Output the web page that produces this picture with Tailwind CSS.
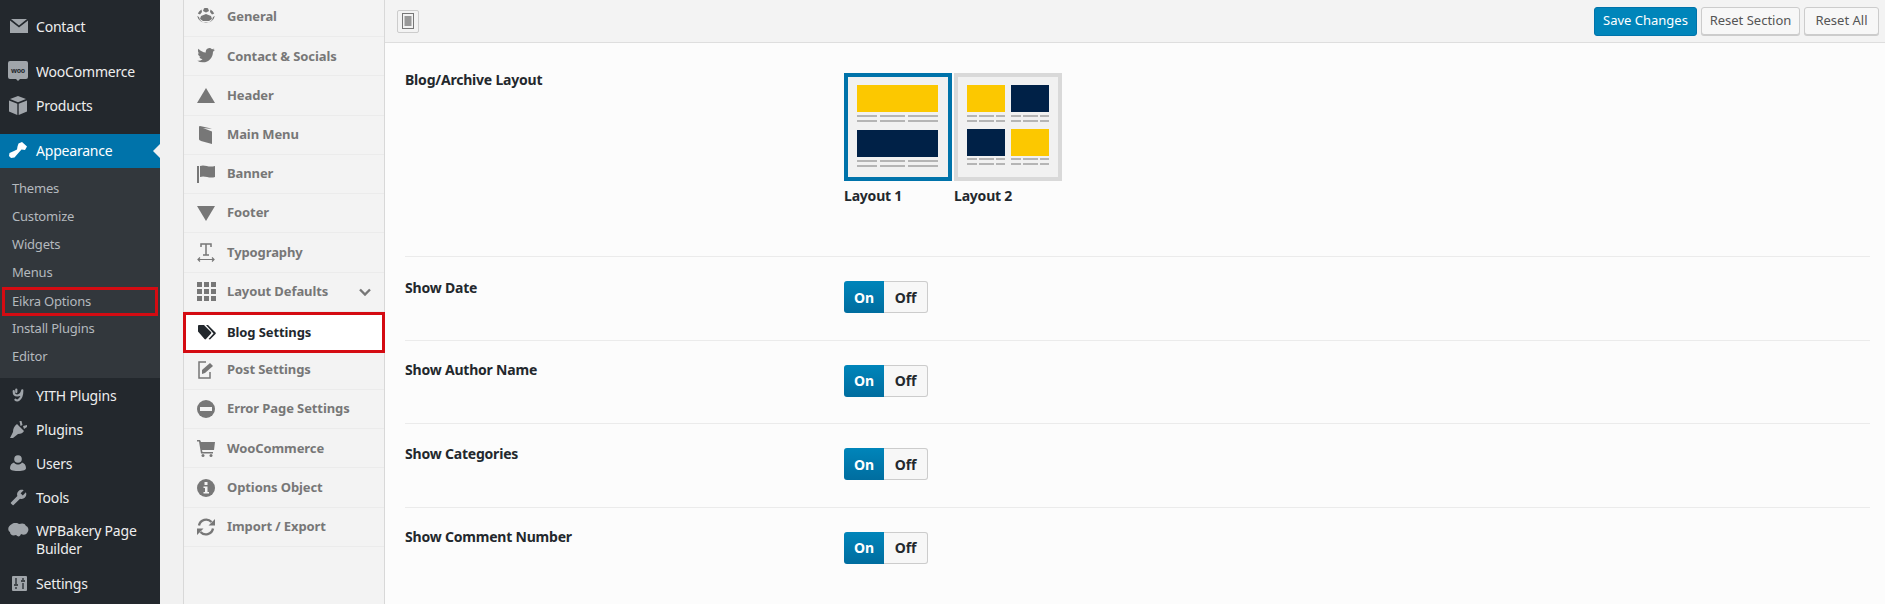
<!DOCTYPE html>
<html lang="en">
<head>
<meta charset="utf-8">
<title>Eikra Options</title>
<script src="https://cdn.jsdelivr.net/npm/@tailwindcss/browser@4"></script>
</head>
<body class="m-0">
<div class="flex w-[1885px] h-[604px] overflow-hidden bg-[#f1f1f1] font-['Noto_Sans','Open_Sans',sans-serif] text-[13px]">

  <!-- WP sidebar -->
  <aside class="w-[160px] shrink-0 bg-[#23282d] text-[#eee] text-[14px] tracking-[-0.2px] pt-[10px]">
    <div class="h-[34px] pb-[2px] flex items-center"><span class="w-[36px] flex justify-center pl-[2px]"><svg class="w-[18px] h-[14px] fill-[#a0a5aa]" viewBox="0 0 18 14"><path d="M1 0h16L9 6.500zM0 1.500l9 7 9-7V14H0z"/></svg></span>Contact</div>
    <div class="h-[11px]"></div>
    <div class="h-[34px] pb-[2px] flex items-center"><span class="w-[36px] flex justify-center"><svg class="w-[20px] h-[20px]" viewBox="0 0 20 20"><path fill="#a0a5aa" d="M2 0h16a2 2 0 012 2v14a2 2 0 01-2 2h-6l-2 2-2-2H2a2 2 0 01-2-2V2a2 2 0 012-2z"/><text x="10" y="11.500" font-size="7" font-weight="700" letter-spacing="-.3" text-anchor="middle" fill="#23282d">woo</text></svg></span>WooCommerce</div>
    <div class="h-[34px] pb-[2px] flex items-center"><span class="w-[36px] flex justify-center"><svg class="w-[18px] h-[19px] fill-[#a0a5aa]" viewBox="0 0 18 19"><path d="M9 0l8 3-8 3.200L1 3zM0 4.500l8.300 3.200V19L0 15.600zM18 4.500v11.100L9.700 19V7.700z"/></svg></span>Products</div>
    <div class="h-[11px]"></div>
    <div class="h-[34px] pb-[2px] flex items-center bg-[#0073aa] text-white relative"><span class="w-[36px] flex justify-center"><svg class="w-[18px] h-[16px] fill-white" viewBox="0 0 18 16"><path d="M9.500 1.500L13 0l5 4.500-2 3.500-3.500-.5-4 4.500-3 3.500L2 16l-2-2 .5-3L5 9l3-1.500.5-3z"/></svg></span>Appearance<span class="absolute right-0 top-[10px] w-0 h-0 border-y-[7px] border-y-transparent border-r-[7px] border-r-[#f1f1f1]"></span></div>
    <div class="h-[210px] bg-[#32373c] py-[7px] text-[#b4b9be] text-[13px]">
      <div class="h-[28px] flex items-center pl-[12px]">Themes</div>
      <div class="h-[28px] flex items-center pl-[12px]">Customize</div>
      <div class="h-[28px] flex items-center pl-[12px]">Widgets</div>
      <div class="h-[28px] flex items-center pl-[12px]">Menus</div>
      <div class="h-[29px] flex items-center pl-[7px] mx-[2px] border-[3px] border-[#d40b12]">Eikra Options</div>
      <div class="h-[28px] -mt-[1px] flex items-center pl-[12px]">Install Plugins</div>
      <div class="h-[28px] flex items-center pl-[12px]">Editor</div>
    </div>
    <div class="h-[1px]"></div>
    <div class="h-[34px] pb-[2px] flex items-center"><span class="w-[36px] flex justify-center"><svg class="w-[12px] h-[15px]" viewBox="0 0 14 16" fill="none" stroke="#a0a5aa" stroke-width="2.600" stroke-linecap="round"><path d="M2 3c0 3 1 5 4 5s5-2 6-6M12 2c0 5-1 9-4 11-1 1-3 1-4 0M5 1v3"/></svg></span>YITH Plugins</div>
    <div class="h-[34px] pb-[2px] flex items-center"><span class="w-[36px] flex justify-center"><svg class="w-[17px] h-[18px] fill-[#a0a5aa]" viewBox="0 0 17 18"><path d="M7 4l7 7c-1 2-3 3-6 3l-5 4H0l3-6c0-3 1-6 4-8zM9.500 1l2 0 1 4-2 1zM13 6l4-1v2l-3 2z"/></svg></span>Plugins</div>
    <div class="h-[34px] pb-[2px] flex items-center"><span class="w-[36px] flex justify-center"><svg class="w-[16px] h-[16px] fill-[#a0a5aa]" viewBox="0 0 16 16"><circle cx="8" cy="4" r="3.800"/><path d="M0 13c0-3 2-5 4-5.500C5 9 6.500 9.500 8 9.500s3-.5 4-2c2 .5 4 2.500 4 5.500 0 2-2 3-8 3s-8-1-8-3z"/></svg></span>Users</div>
    <div class="h-[34px] pb-[2px] flex items-center"><span class="w-[36px] flex justify-center"><svg class="w-[17px] h-[17px] fill-[#a0a5aa]" viewBox="0 0 24 24"><path d="M22.700 19l-9.100-9.100c.9-2.300.4-5-1.500-6.900-2-2-5-2.400-7.400-1.300L9 6 6 9 1.600 4.700C.4 7.100.9 10.100 2.900 12.100c1.900 1.900 4.600 2.400 6.900 1.500l9.100 9.100c.4.400 1 .4 1.400 0l2.300-2.300c.5-.4.500-1.100.1-1.400z" transform="matrix(-1 0 0 1 24 0)"/></svg></span>Tools</div>
    <div class="flex pt-[7px] h-[52px] leading-[18px]"><span class="w-[36px] flex justify-center pl-[1px] pt-[1px]"><svg class="w-[21px] h-[15px] fill-[#a0a5aa]" viewBox="0 0 21 15"><path d="M4 1c3-2 6-1 7 0 3-1 6-1 7 2 3 1 3 5 1 7-1 2-4 2-6 1-1 3-3 3-5 1-3 1-6 0-6-3-3-2-2-6 2-8z"/></svg></span><span>WPBakery Page<br>Builder</span></div>
    <div class="h-[34px] pb-[2px] flex items-center"><span class="w-[36px] flex justify-center pl-[2px]"><svg class="w-[15px] h-[15px]" viewBox="0 0 15 15"><rect width="15" height="15" rx="1" fill="#a0a5aa"/><path d="M4 2v6M4 11v2M11 2v2M11 7v6M2 9h4M9 5h4" stroke="#23282d" stroke-width="1.300"/></svg></span>Settings</div>
  </aside>

  <!-- Options tabs -->
  <nav class="w-[202px] ml-[23px] shrink-0 bg-[#f3f3f3] border-x border-[#d8d8d8] -mt-[2px] text-[#777] font-bold tracking-[-0.1px]">
    <div class="h-[39.23px] flex items-center border-b border-[#ebebeb]"><span class="w-[44px] -mr-[1px] flex justify-center"><svg class="w-[18px] h-[18px] fill-[#777]" viewBox="0 0 18 18"><path d="M7 .2a9 9 0 014 0L12 3 9 4.500 6 3zM4.500 1.500L5 4 3 6.500.8 5.500a9 9 0 013.700-4zM13.500 1.500a9 9 0 013.700 4L15 6.500 13 4zM4 8l5-2 5 2 1 3-3 2H6l-3-2zM.2 8L2 9l1 3 3 2.500h6l3-2.500 1-3 1.800-1A9 9 0 01.2 8z"/></svg></span>General</div>
    <div class="h-[39.23px] flex items-center border-b border-[#ebebeb]"><span class="w-[44px] -mr-[1px] flex justify-center"><svg class="w-[18px] h-[16px] fill-[#777]" viewBox="0 0 24 22"><path d="M23.950 2.570a10 10 0 01-2.820.77 4.960 4.960 0 002.160-2.720c-.95.55-2.010.96-3.120 1.190a4.920 4.920 0 00-8.380 4.480C7.690 6.100 4.070 4.130 1.640 1.160a4.820 4.820 0 00-.67 2.480c0 1.710.87 3.210 2.190 4.100a4.900 4.900 0 01-2.230-.62v.06c0 2.390 1.700 4.380 3.950 4.830a5 5 0 01-2.210.08 4.940 4.940 0 004.600 3.420 9.870 9.870 0 01-6.100 2.100c-.39 0-.78-.02-1.170-.07a14 14 0 007.560 2.210c9.050 0 14-7.500 14-13.980 0-.21 0-.42-.02-.63a9.940 9.940 0 002.460-2.550z"/></svg></span>Contact &amp; Socials</div>
    <div class="h-[39.23px] flex items-center border-b border-[#ebebeb]"><span class="w-[44px] -mr-[1px] flex justify-center"><svg class="w-[18px] h-[15px] fill-[#777]" viewBox="0 0 18 15"><path d="M9 0l9 15H0z"/></svg></span>Header</div>
    <div class="h-[39.23px] flex items-center border-b border-[#ebebeb]"><span class="w-[44px] -mr-[1px] flex justify-center"><svg class="w-[15px] h-[18px] fill-[#777]" viewBox="0 0 15 18"><path d="M1 0l9 2 3 1-9-1 9 3.500V18L2 15c-1-.5-2-1-2-2V1c0-.5.5-1 1-1z"/></svg></span>Main Menu</div>
    <div class="h-[39.23px] flex items-center border-b border-[#ebebeb]"><span class="w-[44px] -mr-[1px] flex justify-center"><svg class="w-[18px] h-[18px] fill-[#777]" viewBox="0 0 18 18"><path d="M0 1h2v17H0zM3 1c5-2 8 2 15 0v11c-6 2-10-2-15 0z"/></svg></span>Banner</div>
    <div class="h-[39.23px] flex items-center border-b border-[#ebebeb]"><span class="w-[44px] -mr-[1px] flex justify-center"><svg class="w-[18px] h-[15px] fill-[#777]" viewBox="0 0 18 15"><path d="M0 0h18L9 15z"/></svg></span>Footer</div>
    <div class="h-[39.23px] flex items-center border-b border-[#ebebeb]"><span class="w-[44px] -mr-[1px] flex justify-center"><svg class="w-[18px] h-[19px]" viewBox="0 0 18 19" fill="none" stroke="#777" stroke-width="1.500"><path d="M4 4V1h10v3M9 1v11M6 12h6"/><path d="M1 16.500h16M3 14.500l-2 2 2 2M15 14.500l2 2-2 2" stroke-width="1.200"/></svg></span>Typography</div>
    <div class="h-[39.23px] flex items-center border-b border-[#ebebeb] pr-[13px]"><span class="w-[44px] -mr-[1px] flex justify-center"><svg class="w-[19px] h-[19px] fill-[#777]" viewBox="0 0 19 19"><path d="M0 0h5v5H0zM7 0h5v5H7zM14 0h5v5h-5zM0 7h5v5H0zM7 7h5v5H7zM14 7h5v5h-5zM0 14h5v5H0zM7 14h5v5H7zM14 14h5v5h-5z"/></svg></span><span class="flex-1">Layout Defaults</span><svg class="w-[12px] h-[8px]" viewBox="0 0 12 8" fill="none" stroke="#777" stroke-width="2.400"><path d="M1 1.500l5 5 5-5"/></svg></div>
    <div class="h-[41px] -mb-[2px] relative flex items-center bg-white text-[#23282d] border-[3px] border-[#d40b12] -mx-[1px] z-10"><span class="w-[42px] -mr-[1px] flex justify-center"><svg class="w-[18px] h-[15px] fill-[#23282d]" viewBox="0 0 18 15"><path d="M0 1c0-.5.5-1 1-1h5l7 7c.5.500.5 1 0 1.500L8 14c-.5.500-1 .5-1.500 0L0 6.500zM8 0h2l7.500 7.500c.5.500.5 1 0 1.500L12 14.500l-1.500-.5 5-5.500z"/></svg></span>Blog Settings</div>
    <div class="h-[39.23px] flex items-center border-b border-[#ebebeb]"><span class="w-[44px] -mr-[1px] flex justify-center"><svg class="w-[17px] h-[18px]" viewBox="0 0 17 18" fill="none" stroke="#777" stroke-width="1.500"><path d="M8 1H1v16h11v-6"/><path d="M4 9l8-7 3 3-8 7-3 1z" fill="#777" stroke="none"/></svg></span>Post Settings</div>
    <div class="h-[39.23px] flex items-center border-b border-[#ebebeb]"><span class="w-[44px] -mr-[1px] flex justify-center"><svg class="w-[18px] h-[18px]" viewBox="0 0 18 18"><circle cx="9" cy="9" r="9" fill="#777"/><rect x="3" y="7" width="12" height="4" fill="#f3f3f3"/></svg></span>Error Page Settings</div>
    <div class="h-[39.23px] flex items-center border-b border-[#ebebeb]"><span class="w-[44px] -mr-[1px] flex justify-center"><svg class="w-[18px] h-[17px] fill-[#777]" viewBox="0 0 18 17"><path d="M0 0h3l1 2h14l-1 8H5l.5 2H16v1.500H4L2 1.500H0z"/><circle cx="6" cy="15.500" r="1.500"/><circle cx="14" cy="15.500" r="1.500"/></svg></span>WooCommerce</div>
    <div class="h-[39.23px] flex items-center border-b border-[#ebebeb]"><span class="w-[44px] -mr-[1px] flex justify-center"><svg class="w-[18px] h-[18px]" viewBox="0 0 18 18"><circle cx="9" cy="9" r="9" fill="#777"/><rect x="7.500" y="3" width="3" height="3" fill="#f3f3f3"/><path d="M6.500 7.500h4V13H12v1.500H6.500V13H8V9H6.500z" fill="#f3f3f3"/></svg></span>Options Object</div>
    <div class="h-[39.23px] flex items-center border-b border-[#ebebeb]"><span class="w-[44px] -mr-[1px] flex justify-center"><svg class="w-[18px] h-[18px]" viewBox="0 0 18 18" fill="none" stroke="#777" stroke-width="2.400"><path d="M2 7.500a7.300 7.300 0 0112.500-3.500M16 10.500A7.300 7.300 0 013.500 14"/><path d="M18 1v6.500h-6.500zM0 17v-6.500h6.500z" fill="#777" stroke="none"/></svg></span>Import / Export</div>
  </nav>

  <!-- Main content -->
  <main class="flex-1 min-w-0 bg-[#fcfcfc] flex flex-col">
    <header class="h-[43px] shrink-0 bg-[#f3f3f3] border-b border-[#dedede] flex items-center justify-between pl-[12px] pr-[6px]">
      <span class="w-[22px] h-[23px] border border-[#ccc] rounded-[2px] flex items-center justify-center"><svg class="w-[12px] h-[16px]" viewBox="0 0 12 16"><rect x=".5" y=".5" width="11" height="15" fill="none" stroke="#777"/><rect x="2.500" y="3" width="7" height="10" fill="#999"/></svg></span>
      <div class="flex items-center gap-[4px] text-[13px]">
        <button class="h-[29px] w-[103px] rounded-[3px] bg-[#0085ba] border border-[#0073aa] text-white">Save Changes</button>
        <button class="h-[28px] w-[99px] rounded-[3px] bg-[#f7f7f7] border border-[#ccc] text-[#555] shadow-[0_1px_0_#ccc]">Reset Section</button>
        <button class="h-[28px] w-[75px] rounded-[3px] bg-[#f7f7f7] border border-[#ccc] text-[#555] shadow-[0_1px_0_#ccc]">Reset All</button>
      </div>
    </header>

    <div class="ml-[20px] mr-[15px] font-bold text-[#23282d] text-[14px] tracking-[-0.2px]">
      <section class="h-[214px] flex border-b border-[#ebebeb] pt-[28px]">
        <div class="w-[439px] leading-[19px] -mt-[1px]">Blog/Archive Layout</div>
        <div class="flex gap-[2px] mt-[2px]">
          <div class="w-[108px]">
            <div class="h-[108px] border-[4px] border-[#0073aa] bg-[#f1f1f1] pl-[9px] pt-[8px]">
              <div class="w-[81px] h-[27px] bg-[#fcc800]"></div>
              <div class="flex gap-[3px] mt-[3px] w-[81px]">
                <div class="w-[20px] h-[7px] border-y-2 border-[#b5b5b5]"></div><div class="w-[25px] h-[7px] border-y-2 border-[#b5b5b5]"></div><div class="w-[30px] h-[7px] border-y-2 border-[#b5b5b5]"></div>
              </div>
              <div class="w-[81px] h-[27px] bg-[#002147] mt-[8px]"></div>
              <div class="flex gap-[3px] mt-[3px] w-[81px]">
                <div class="w-[20px] h-[7px] border-y-2 border-[#b5b5b5]"></div><div class="w-[25px] h-[7px] border-y-2 border-[#b5b5b5]"></div><div class="w-[30px] h-[7px] border-y-2 border-[#b5b5b5]"></div>
              </div>
            </div>
            <div class="mt-[5px] leading-[19px]">Layout 1</div>
          </div>
          <div class="w-[108px]">
            <div class="h-[108px] border-[4px] border-[#d9d9d9] bg-[#f1f1f1] pl-[9px] pt-[8px]">
              <div class="flex gap-[6px]">
                <div class="w-[38px]"><div class="h-[27px] bg-[#fcc800]"></div><div class="flex gap-[2px] mt-[3px]"><div class="w-[10px] h-[7px] border-y-2 border-[#b5b5b5]"></div><div class="w-[15px] h-[7px] border-y-2 border-[#b5b5b5]"></div><div class="w-[9px] h-[7px] border-y-2 border-[#b5b5b5]"></div></div></div>
                <div class="w-[38px]"><div class="h-[27px] bg-[#002147]"></div><div class="flex gap-[2px] mt-[3px]"><div class="w-[10px] h-[7px] border-y-2 border-[#b5b5b5]"></div><div class="w-[15px] h-[7px] border-y-2 border-[#b5b5b5]"></div><div class="w-[9px] h-[7px] border-y-2 border-[#b5b5b5]"></div></div></div>
              </div>
              <div class="flex gap-[6px] mt-[7px]">
                <div class="w-[38px]"><div class="h-[27px] bg-[#002147]"></div><div class="flex gap-[2px] mt-[2px]"><div class="w-[10px] h-[7px] border-y-2 border-[#b5b5b5]"></div><div class="w-[15px] h-[7px] border-y-2 border-[#b5b5b5]"></div><div class="w-[9px] h-[7px] border-y-2 border-[#b5b5b5]"></div></div></div>
                <div class="w-[38px]"><div class="h-[27px] bg-[#fcc800]"></div><div class="flex gap-[2px] mt-[2px]"><div class="w-[10px] h-[7px] border-y-2 border-[#b5b5b5]"></div><div class="w-[15px] h-[7px] border-y-2 border-[#b5b5b5]"></div><div class="w-[9px] h-[7px] border-y-2 border-[#b5b5b5]"></div></div></div>
              </div>
            </div>
            <div class="mt-[5px] leading-[19px]">Layout 2</div>
          </div>
        </div>
      </section>

      <section class="h-[83.5px] flex border-b border-[#ebebeb] pt-[24px]">
        <div class="w-[439px] leading-[19px] -mt-[3px]">Show Date</div>
        <div class="flex h-[32px] w-[84px]"><span class="w-[40px] rounded-l-[3px] bg-linear-to-b from-[#0085ba] to-[#006d9f] text-white flex items-center justify-center">On</span><span class="w-[44px] rounded-r-[3px] bg-[#f7f7f7] border border-[#ccc] border-l-0 flex items-center justify-center">Off</span></div>
      </section>
      <section class="h-[83.5px] flex border-b border-[#ebebeb] pt-[24px]">
        <div class="w-[439px] leading-[19px] -mt-[5px]">Show Author Name</div>
        <div class="flex h-[32px] w-[84px]"><span class="w-[40px] rounded-l-[3px] bg-linear-to-b from-[#0085ba] to-[#006d9f] text-white flex items-center justify-center">On</span><span class="w-[44px] rounded-r-[3px] bg-[#f7f7f7] border border-[#ccc] border-l-0 flex items-center justify-center">Off</span></div>
      </section>
      <section class="h-[83.5px] flex border-b border-[#ebebeb] pt-[24px]">
        <div class="w-[439px] leading-[19px] -mt-[4px]">Show Categories</div>
        <div class="flex h-[32px] w-[84px]"><span class="w-[40px] rounded-l-[3px] bg-linear-to-b from-[#0085ba] to-[#006d9f] text-white flex items-center justify-center">On</span><span class="w-[44px] rounded-r-[3px] bg-[#f7f7f7] border border-[#ccc] border-l-0 flex items-center justify-center">Off</span></div>
      </section>
      <section class="flex pt-[24px]">
        <div class="w-[439px] leading-[19px] -mt-[5px]">Show Comment Number</div>
        <div class="flex h-[32px] w-[84px]"><span class="w-[40px] rounded-l-[3px] bg-linear-to-b from-[#0085ba] to-[#006d9f] text-white flex items-center justify-center">On</span><span class="w-[44px] rounded-r-[3px] bg-[#f7f7f7] border border-[#ccc] border-l-0 flex items-center justify-center">Off</span></div>
      </section>
    </div>
  </main>
</div>
</body>
</html>
